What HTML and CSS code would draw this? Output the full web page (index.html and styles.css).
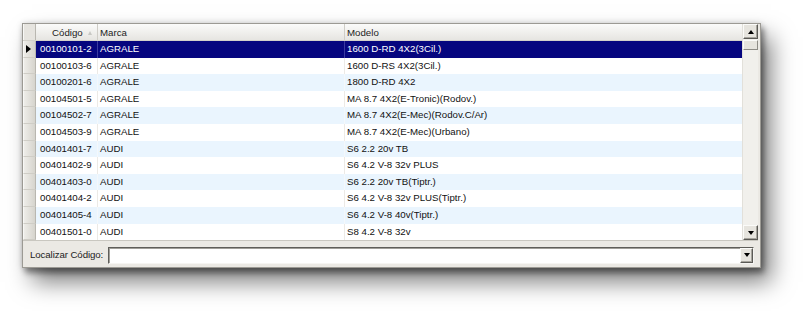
FILE: index.html
```html
<!DOCTYPE html>
<html lang="pt">
<head>
<meta charset="utf-8">
<link rel="stylesheet" href="styles.css">
</head>
<body>
<div class="window">
  <div class="grid">
    <div class="table">
      <div class="row hdr">
        <div class="ind"></div>
        <div class="c1">Código<span class="sort"></span></div>
        <div class="c2">Marca</div>
        <div class="c3">Modelo</div>
      </div>
      <div class="row sel"><div class="ind"><span class="ptr"></span></div><div class="c1">00100101-2</div><div class="c2">AGRALE</div><div class="c3">1600 D-RD 4X2(3Cil.)</div></div>
      <div class="row"><div class="ind"></div><div class="c1">00100103-6</div><div class="c2">AGRALE</div><div class="c3">1600 D-RS 4X2(3Cil.)</div></div>
      <div class="row alt"><div class="ind"></div><div class="c1">00100201-6</div><div class="c2">AGRALE</div><div class="c3">1800 D-RD 4X2</div></div>
      <div class="row"><div class="ind"></div><div class="c1">00104501-5</div><div class="c2">AGRALE</div><div class="c3">MA 8.7 4X2(E-Tronic)(Rodov.)</div></div>
      <div class="row alt"><div class="ind"></div><div class="c1">00104502-7</div><div class="c2">AGRALE</div><div class="c3">MA 8.7 4X2(E-Mec)(Rodov.C/Ar)</div></div>
      <div class="row"><div class="ind"></div><div class="c1">00104503-9</div><div class="c2">AGRALE</div><div class="c3">MA 8.7 4X2(E-Mec)(Urbano)</div></div>
      <div class="row alt"><div class="ind"></div><div class="c1">00401401-7</div><div class="c2">AUDI</div><div class="c3">S6 2.2 20v TB</div></div>
      <div class="row"><div class="ind"></div><div class="c1">00401402-9</div><div class="c2">AUDI</div><div class="c3">S6 4.2 V-8 32v PLUS</div></div>
      <div class="row alt"><div class="ind"></div><div class="c1">00401403-0</div><div class="c2">AUDI</div><div class="c3">S6 2.2 20v TB(Tiptr.)</div></div>
      <div class="row"><div class="ind"></div><div class="c1">00401404-2</div><div class="c2">AUDI</div><div class="c3">S6 4.2 V-8 32v PLUS(Tiptr.)</div></div>
      <div class="row alt"><div class="ind"></div><div class="c1">00401405-4</div><div class="c2">AUDI</div><div class="c3">S6 4.2 V-8 40v(Tiptr.)</div></div>
      <div class="row"><div class="ind"></div><div class="c1">00401501-0</div><div class="c2">AUDI</div><div class="c3">S8 4.2 V-8 32v</div></div>
    </div>
    <div class="vscroll">
      <div class="sbtn"><span class="tri up"></span></div>
      <div class="thumb"></div>
      <div class="track"></div>
      <div class="sbtn"><span class="tri down"></span></div>
    </div>
  </div>
  <div class="finder">
    <span class="lbl">Localizar Código:</span>
    <div class="combo">
      <div class="field"></div>
      <div class="cbtn"><span class="tri down"></span></div>
    </div>
  </div>
</div>
</body>
</html>
```
FILE: styles.css
```css
html, body {
  margin: 0;
  padding: 0;
  background: #ffffff;
}
body {
  padding: 23px 0 43px 22px;
  font-family: "Liberation Sans", Arial, sans-serif;
  font-size: 9.7px;
  color: #111;
}
.window {
  width: 737px;
  height: 243px;
  border: 1px solid #9c9a94;
  background: #ebe9e4;
  display: flex;
  flex-direction: column;
  box-shadow: 3px 5px 6px rgba(0, 0, 0, 0.4), 10px 14px 22px rgba(0, 0, 0, 0.5), 0 0 6px rgba(0, 0, 0, 0.15);
}
.grid {
  display: flex;
  height: 216px;
  margin-right: 2px;
  border-bottom: 1px solid #c9c7c0;
  background: #fff;
}
.table {
  flex: 1;
  overflow: hidden;
}
.row {
  display: flex;
  height: 16.6px;
  line-height: 16.6px;
  box-sizing: border-box;
  white-space: nowrap;
}
.row > div {
  box-sizing: border-box;
  overflow: hidden;
}
.ind {
  width: 13px;
  flex: none;
  background: linear-gradient(to right, #eeede9, #d6d4cd);
  border-left: 1px solid #f8f8f6;
  border-right: 1px solid #b9b7b0;
  border-bottom: 1px solid #cfcdc6;
  display: flex;
  align-items: center;
}
.c1 {
  width: 62px;
  flex: none;
  padding-left: 4px;
  border-right: 1px solid #eceae6;
}
.c2 {
  width: 247px;
  flex: none;
  padding-left: 2px;
  border-right: 1px solid #eceae6;
}
.c3 {
  flex: 1;
  padding-left: 2px;
}
.row.alt {
  background: #eaf5fe;
}
.row.alt .c1, .row.alt .c2 {
  border-right-color: #f4f8fb;
}
.row.sel {
  background: #06067f;
  color: #fff;
}
.row.sel .c1, .row.sel .c2 {
  border-right-color: #3b3ba0;
}
.hdr {
  height: 17px;
  line-height: 17px;
  background: linear-gradient(#fbfbfa, #e6e5e1);
  border-bottom: 1px solid #d3d1ca;
  color: #222;
}
.hdr .ind {
  background: #e6e4df;
  border-bottom: 0;
}
.hdr .c1 {
  padding-left: 16px;
  border-right: 1px solid #cfcdc7;
}
.hdr .c2 {
  border-right: 1px solid #cfcdc7;
}
.sort {
  display: inline-block;
  width: 0;
  height: 0;
  border-left: 2px solid transparent;
  border-right: 2px solid transparent;
  border-bottom: 4px solid #c8c8c4;
  margin-left: 5px;
  vertical-align: 1px;
}
.ptr {
  display: block;
  width: 0;
  height: 0;
  border-top: 4px solid transparent;
  border-bottom: 4px solid transparent;
  border-left: 5px solid #000;
  margin-left: 2px;
}
.vscroll {
  width: 15px;
  flex: none;
  display: flex;
  flex-direction: column;
  background: #f1f0ec;
  border-left: 1px solid #e2e0da;
}
.sbtn, .cbtn {
  height: 13px;
  flex: none;
  background: #e6e4de;
  border: 1px solid;
  border-color: #fbfbf9 #5b5a56 #5b5a56 #fbfbf9;
  box-shadow: inset -1px -1px 0 #a6a49d;
  display: flex;
  align-items: center;
  justify-content: center;
}
.thumb {
  height: 8px;
  margin-top: 1px;
  background: #e6e4de;
  border: 1px solid;
  border-color: #fbfbf9 #8e8c86 #8e8c86 #fbfbf9;
}
.track {
  flex: 1;
}
.tri {
  width: 0;
  height: 0;
  border-left: 3px solid transparent;
  border-right: 3px solid transparent;
}
.tri.up {
  border-bottom: 4px solid #000;
}
.tri.down {
  border-top: 4px solid #000;
}
.finder {
  flex: 1;
  display: flex;
  align-items: center;
  padding: 0 6px 0 7px;
  gap: 5px;
}
.lbl {
  color: #222;
  white-space: nowrap;
  letter-spacing: -0.1px;
}
.combo {
  flex: 1;
  height: 17px;
  display: flex;
  border: 1px solid;
  border-color: #5f5e5a #f6f5f2 #f6f5f2 #5f5e5a;
  box-shadow: inset 1px 1px 0 #a09e98;
  background: #fff;
  box-sizing: border-box;
  margin-top: 2px;
}
.field {
  flex: 1;
}
.cbtn {
  width: 13px;
  height: 15px;
  box-sizing: border-box;
}
```
